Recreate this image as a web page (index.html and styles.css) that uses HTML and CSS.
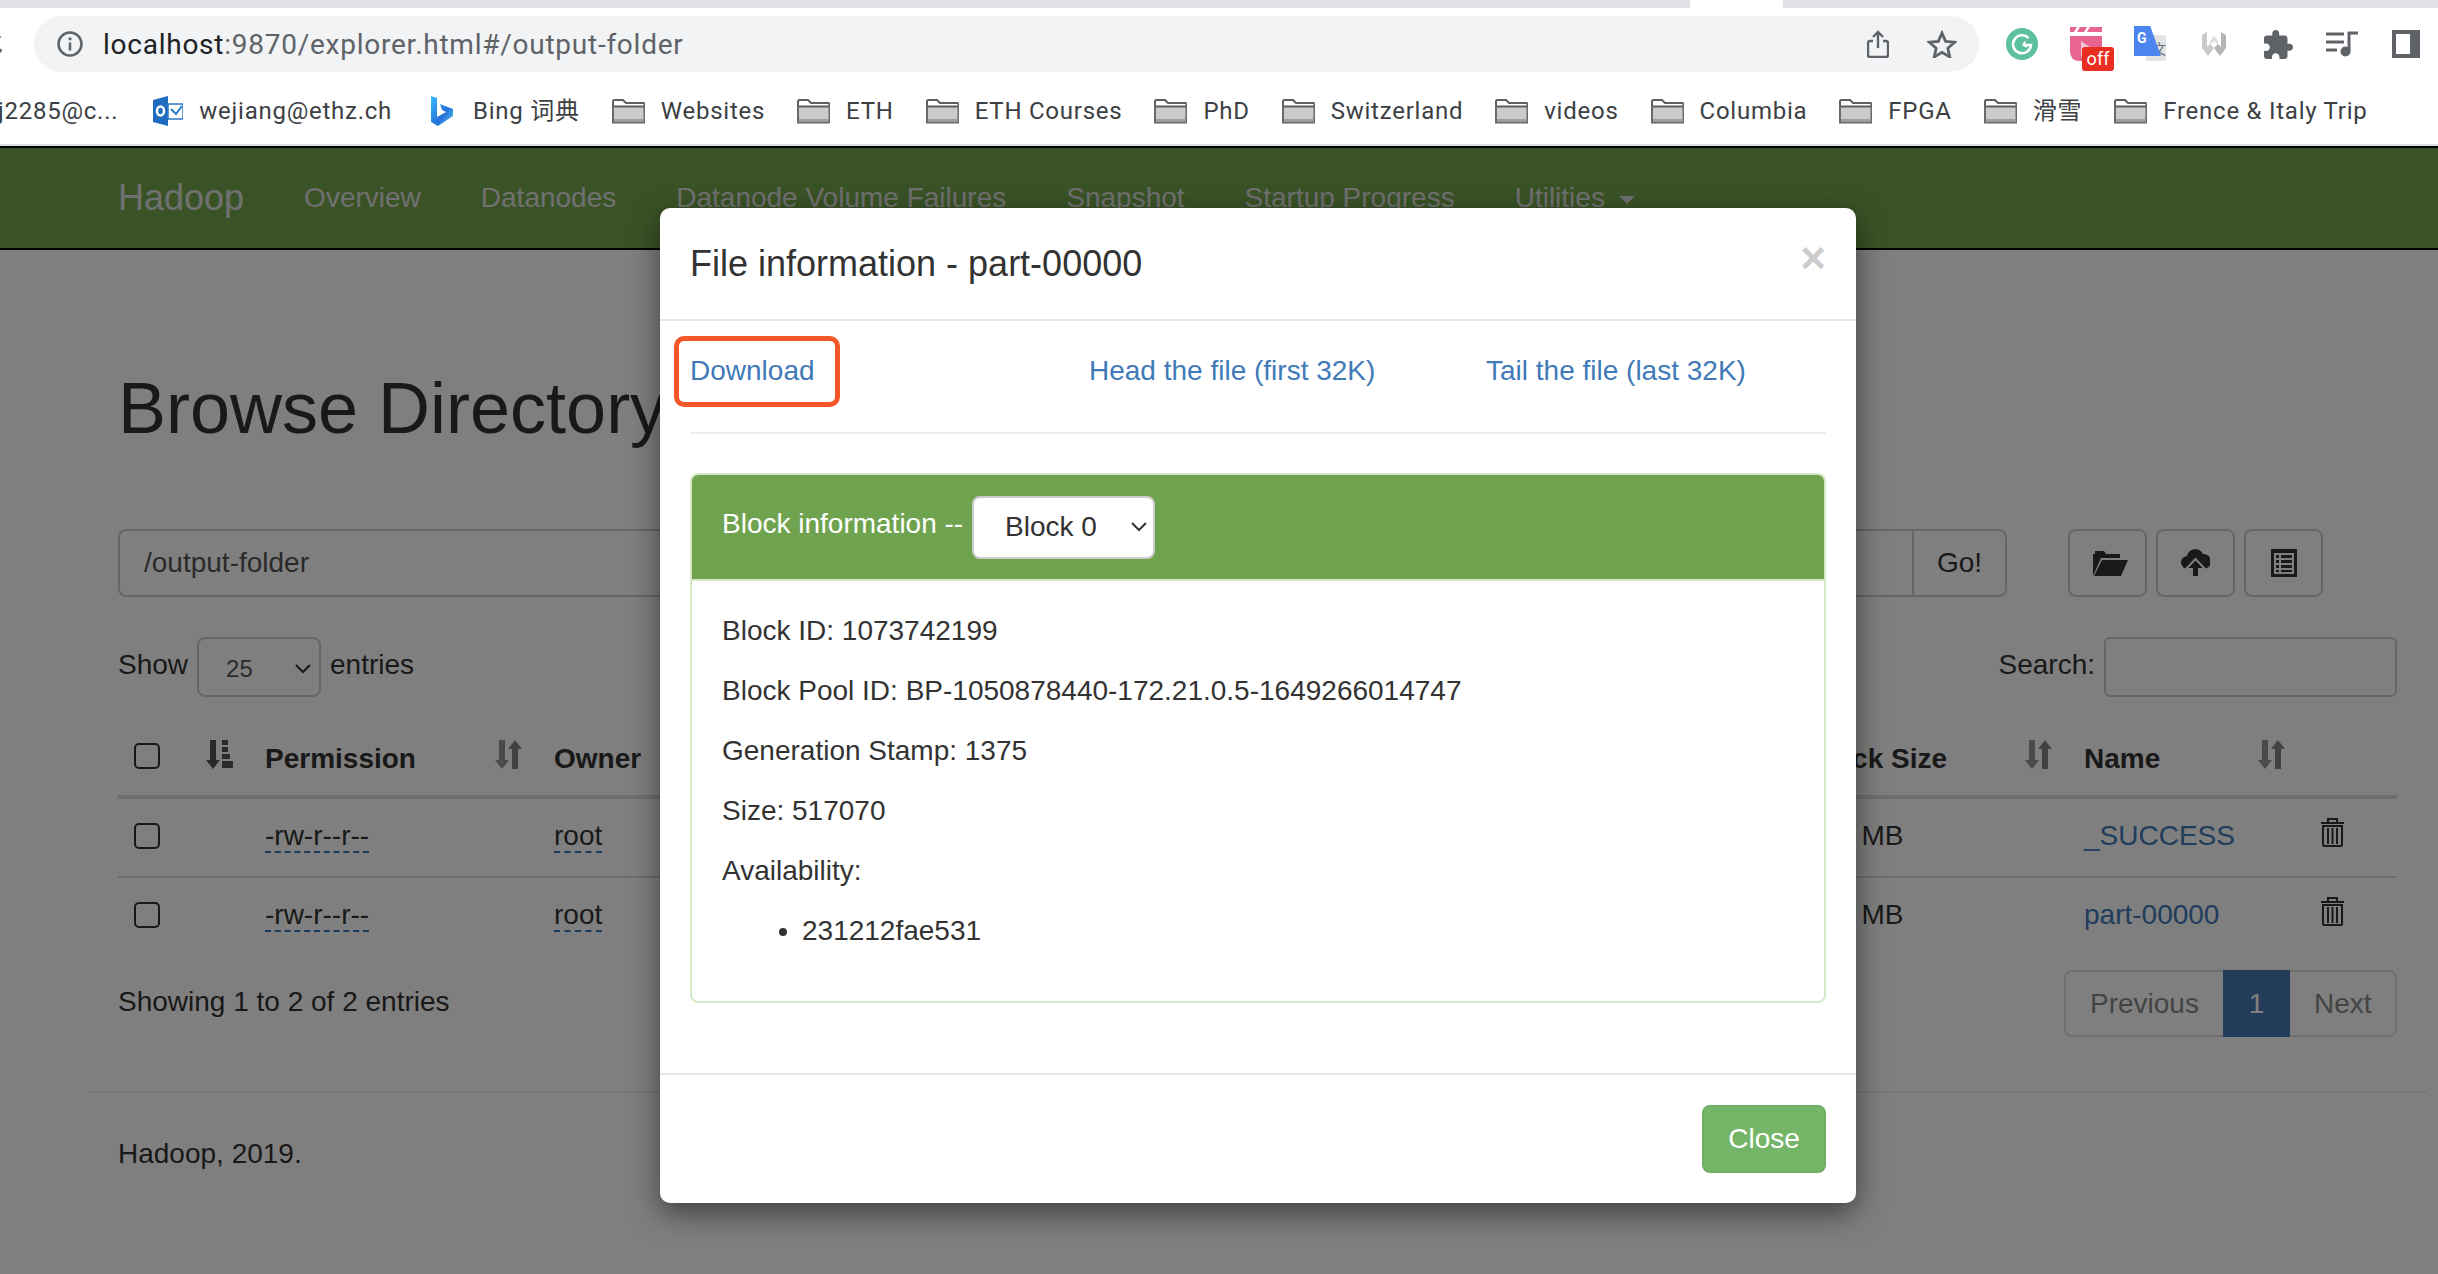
FILE: index.html
```html
<!DOCTYPE html>
<html lang="en">
<head>
    <meta charset="UTF-8">
    <title>Browsing HDFS</title>
    <link rel="stylesheet" href="styles.css">
</head>
<body>
    <svg class="sprites" width="0" height="0">
        <symbol id="folder" viewBox="0 0 33 25">
            <path d="M1 24V2.500Q1 1 2.500 1H11l3 3h17q1.500 0 1.500 1.500V24z" fill="#cbcbcb"/>
            <path d="M1 7.500V2.500Q1 1 2.500 1H11l3 3h17q1.500 0 1.500 1.500v2z" fill="#fff" stroke="#5f5f5f" stroke-width="2"/>
            <path d="M1 7V23.500h31.500V7" fill="none" stroke="#6a6a6a" stroke-width="2"/>
            <path d="M2 20h29v3H2z" fill="#9e9e9e"/>
        </symbol>
        <symbol id="sort" viewBox="0 0 28 29">
            <path d="M5 0h6v20h4l-7 9-7-9h4z" fill="#666" opacity=".7"/>
            <path d="M17 29h6V9h4l-7-9-7 9h4z" fill="#666" opacity=".8" transform="translate(1 0)"/>
        </symbol>
        <symbol id="trash" viewBox="0 0 25 30">
            <path d="M1 6h23M8 5V2h9v3" fill="none" stroke="#333" stroke-width="2"/>
            <path d="M3 9h19v19a1 1 0 0 1-1 1H4a1 1 0 0 1-1-1z" fill="none" stroke="#333" stroke-width="2"/>
            <path d="M8 11v16M12.500 11v16M17 11v16" stroke="#333" stroke-width="2"/>
        </symbol>
    </svg>

    <div class="tabstrip"><span class="tab-gap"></span></div>

    <div class="toolbar">
        <svg class="reload" width="24" height="24" viewBox="0 0 24 24"><path d="M20 6a11 11 0 1 0 1 11" fill="none" stroke="#5f6368" stroke-width="3"/></svg>
        <div class="omnibox">
            <svg class="info-icon" width="26" height="26" viewBox="0 0 26 26">
                <circle cx="13" cy="13" r="11.500" fill="none" stroke="#5f6368" stroke-width="2.500"/>
                <path d="M13 11.500v8" stroke="#5f6368" stroke-width="2.500"/>
                <circle cx="13" cy="7.800" r="1.600" fill="#5f6368"/>
            </svg>
            <span class="url"><b>localhost</b>:9870/explorer.html#/output-folder</span>
            <svg class="share-icon" width="22" height="28" viewBox="0 0 22 28">
                <path d="M6 11H3a2 2 0 0 0-2 2v12a2 2 0 0 0 2 2h16a2 2 0 0 0 2-2V13a2 2 0 0 0-2-2h-3M11 18V2M6 7l5-5 5 5" fill="none" stroke="#5f6368" stroke-width="2.400"/>
            </svg>
            <svg class="star-icon" width="30" height="28" viewBox="0 0 30 28">
                <path d="M15 3l3.600 8.400 9 .8-6.800 6 2 8.800L15 22.300 7.200 27l2-8.800-6.800-6 9-.8z" fill="none" stroke="#5f6368" stroke-width="2.800" stroke-linejoin="miter"/>
            </svg>
        </div>
        <div class="extensions">
            <svg class="ext ext-grammarly" width="32" height="32" viewBox="0 0 32 32">
                <circle cx="16" cy="16" r="16" fill="#5cc19c"/>
                <path d="M22.500 10A9 9 0 1 0 25 17h-7" fill="none" stroke="#fff" stroke-width="2.600"/>
                <path d="M19 13.500l-1.500 3.500 3.500 2" fill="none" stroke="#fff" stroke-width="2"/>
            </svg>
            <div class="ext ext-video">
                <svg width="32" height="34" viewBox="0 0 32 34">
                    <path d="M0 0h32v5H0z" fill="#e8658f"/>
                    <path d="M7 0h3L7 5H4zM17 0h3l-3 5h-3z" fill="#fff"/>
                    <path d="M0 9h32v15q0 10-10 10H10Q0 34 0 24z" fill="#e8658f"/>
                    <path d="M11 14l12 8-12 8z" fill="#f7c4d3"/>
                </svg>
                <span class="off-badge">off</span>
            </div>
            <div class="ext ext-translate">
                <span class="page-back">文</span>
                <span class="page-front">G</span>
            </div>
            <svg class="ext ext-wiki" width="24" height="24" viewBox="0 0 24 24">
                <path d="M0 3l5-3v15l3-3 4 4-6 8-6-8z" fill="#c9c9c9"/>
                <path d="M24 3l-5-3v15l-3-3-4 4 6 8 6-8z" fill="#b5b5b5"/>
                <path d="M12 4l4 5v4l-4-4-4 4V9z" fill="#dedede"/>
            </svg>
            <svg class="ext ext-puzzle" width="29" height="29" viewBox="2 1 21 21">
                <path d="M20.500 11H19V7c0-1.100-.9-2-2-2h-4V3.500C13 2.120 11.880 1 10.500 1S8 2.120 8 3.500V5H4c-1.100 0-1.990.9-1.990 2v3.800H3.500c1.490 0 2.700 1.210 2.700 2.700s-1.210 2.700-2.700 2.700H2V20c0 1.100.9 2 2 2h3.800v-1.500c0-1.490 1.210-2.700 2.700-2.700 1.490 0 2.700 1.210 2.700 2.700V22H17c1.100 0 2-.9 2-2v-4h1.500c1.380 0 2.500-1.120 2.500-2.500S21.880 11 20.500 11z" fill="#5f6368"/>
            </svg>
            <svg class="ext ext-queue" width="32" height="26" viewBox="0 0 32 26">
                <path d="M0 3h18M0 11h18M0 19h11" stroke="#5f6368" stroke-width="3"/>
                <path d="M23 20V2h9" fill="none" stroke="#5f6368" stroke-width="3"/>
                <circle cx="19.500" cy="20.500" r="5" fill="#5f6368"/>
            </svg>
            <svg class="ext ext-side" width="28" height="28" viewBox="0 0 28 28">
                <path fill-rule="evenodd" d="M0 0h28v28H0zM4 4v20h14V4z" fill="#5f6368"/>
            </svg>
        </div>
    </div>

    <div class="bookmarks">
        <span class="bm bm-first">j2285@c...</span>
        <span class="bm bm-mail">
            <svg class="bm-logo" width="30" height="30" viewBox="0 0 30 30">
                <path d="M0 4l15-4v30L0 26z" fill="#1f6cbf"/>
                <ellipse cx="7.500" cy="15" rx="3.500" ry="4.500" fill="none" stroke="#fff" stroke-width="2.500"/>
                <path d="M15 8h15v15H15z" fill="#fff" stroke="#2a78c8" stroke-width="1.500"/>
                <path d="M18 13l5 5 6-8" fill="none" stroke="#2a78c8" stroke-width="2"/>
            </svg>
            wejiang@ethz.ch
        </span>
        <span class="bm bm-bing">
            <svg class="bm-logo" width="22" height="30" viewBox="0 0 22 30">
                <defs>
                    <linearGradient id="bing-g" x1="0" y1="0" x2="1" y2="1">
                        <stop offset="0" stop-color="#37bdff"/>
                        <stop offset=".6" stop-color="#2470d8"/>
                        <stop offset="1" stop-color="#5fd0f0"/>
                    </linearGradient>
                </defs>
                <path d="M0 0l6 2v19l9-5-4-2-2-6 13 5v7L7 30l-7-4z" fill="url(#bing-g)"/>
            </svg>
            Bing 词典
        </span>
        <span class="bm"><svg class="bm-folder"><use href="#folder"/></svg>Websites</span>
        <span class="bm"><svg class="bm-folder"><use href="#folder"/></svg>ETH</span>
        <span class="bm"><svg class="bm-folder"><use href="#folder"/></svg>ETH Courses</span>
        <span class="bm"><svg class="bm-folder"><use href="#folder"/></svg>PhD</span>
        <span class="bm"><svg class="bm-folder"><use href="#folder"/></svg>Switzerland</span>
        <span class="bm"><svg class="bm-folder"><use href="#folder"/></svg>videos</span>
        <span class="bm"><svg class="bm-folder"><use href="#folder"/></svg>Columbia</span>
        <span class="bm"><svg class="bm-folder"><use href="#folder"/></svg>FPGA</span>
        <span class="bm"><svg class="bm-folder"><use href="#folder"/></svg>滑雪</span>
        <span class="bm"><svg class="bm-folder"><use href="#folder"/></svg>Frence &amp; Italy Trip</span>
    </div>

    <div class="viewport">
        <nav class="navbar">
            <a class="brand">Hadoop</a>
            <a class="nav-link">Overview</a>
            <a class="nav-link">Datanodes</a>
            <a class="nav-link">Datanode Volume Failures</a>
            <a class="nav-link">Snapshot</a>
            <a class="nav-link">Startup Progress</a>
            <a class="nav-link">Utilities <i class="caret"></i></a>
        </nav>

        <main class="page">
            <h1>Browse Directory</h1>

            <div class="path-row">
                <div class="input-group">
                    <input class="path-input" type="text" value="/output-folder">
                    <button class="btn btn-go">Go!</button>
                </div>
                <button class="btn btn-icon">
                    <svg class="icon-open" width="35" height="26" viewBox="0 0 35 26"><path d="M0 26V4h2V1h9l2 3h14v4H8zM9 10h26l-7 16H1z" fill="#333"/></svg>
                </button>
                <button class="btn btn-icon">
                    <svg width="29" height="28" viewBox="0 0 29 28">
                        <path d="M7 20a6.500 6.500 0 0 1-1-13A8.500 8.500 0 0 1 22 5a7.500 7.500 0 0 1 1 15z" fill="#333"/>
                        <path d="M14.500 10l9.500 10h-6v8h-7v-8H5z" fill="#333" stroke="#fff" stroke-width="2"/>
                    </svg>
                </button>
                <button class="btn btn-icon">
                    <svg width="26" height="28" viewBox="0 0 26 28"><path fill-rule="evenodd" d="M0 0h26v28H0zM3 4v21h20V4z" fill="#333"/><path d="M5 6h3v3H5zM10 6h11v3H10zM5 11h3v3H5zM10 11h11v3H10zM5 16h3v3H5zM10 16h11v3H10zM5 21h3v2H5zM10 21h11v2H10z" fill="#333"/></svg>
                </button>
            </div>

            <div class="dt-top">
                <div class="dt-length">
                    <span class="dt-label">Show</span>
                    <div class="fake-select fake-select-sm">25
                        <svg width="16" height="10" viewBox="0 0 16 10"><path d="M1 1l7 7 7-7" fill="none" stroke="#333" stroke-width="2"/></svg>
                    </div>
                    <span class="dt-label">entries</span>
                </div>
                <div class="dt-search">
                    <span class="dt-label">Search:</span>
                    <input class="search-input" type="text">
                </div>
            </div>

            <table class="dir-table">
                <colgroup>
                    <col class="c-check"><col class="c-perm"><col class="c-owner"><col class="c-covered">
                    <col class="c-block"><col class="c-name"><col class="c-del">
                </colgroup>
                <thead>
                    <tr>
                        <th><div class="th-in"><input class="check" type="checkbox">
                            <svg class="sort" width="28" height="29" viewBox="0 0 28 29"><path d="M5 0h6v20h4l-7 9-7-9h4z" fill="#555"/><path d="M17 0h6v5h-6zM17 7h6v5h-6zM17 14h8v5h-8zM17 21h11v7H17z" fill="#555"/></svg>
                        </div></th>
                        <th><div class="th-in">Permission<svg class="sort"><use href="#sort"/></svg></div></th>
                        <th><div class="th-in">Owner<svg class="sort"><use href="#sort"/></svg></div></th>
                        <th></th>
                        <th><div class="th-in">Block Size<svg class="sort"><use href="#sort"/></svg></div></th>
                        <th><div class="th-in">Name<svg class="sort"><use href="#sort"/></svg></div></th>
                        <th></th>
                    </tr>
                </thead>
                <tbody>
                    <tr>
                        <td><input class="check" type="checkbox"></td>
                        <td><span class="editable">-rw-r--r--</span></td>
                        <td><span class="editable">root</span></td>
                        <td></td>
                        <td>128 MB</td>
                        <td><a class="link">_SUCCESS</a></td>
                        <td><svg class="trash"><use href="#trash"/></svg></td>
                    </tr>
                    <tr>
                        <td><input class="check" type="checkbox"></td>
                        <td><span class="editable">-rw-r--r--</span></td>
                        <td><span class="editable">root</span></td>
                        <td></td>
                        <td>128 MB</td>
                        <td><a class="link">part-00000</a></td>
                        <td><svg class="trash"><use href="#trash"/></svg></td>
                    </tr>
                </tbody>
            </table>

            <div class="dt-bottom">
                <div class="dt-info">Showing 1 to 2 of 2 entries</div>
                <div class="pagination">
                    <a class="pg pg-prev">Previous</a>
                    <a class="pg pg-active">1</a>
                    <a class="pg pg-next">Next</a>
                </div>
            </div>

            <hr class="foot-rule">
            <p class="foot-text">Hadoop, 2019.</p>
        </main>

        <div class="backdrop"></div>

        <div class="modal">
            <div class="modal-head">
                <h4 class="modal-title">File information - part-00000</h4>
                <span class="close">×</span>
            </div>
            <div class="modal-body">
                <div class="file-links">
                    <a class="link file-download">Download</a>
                    <a class="link">Head the file (first 32K)</a>
                    <a class="link">Tail the file (last 32K)</a>
                </div>
                <div class="panel">
                    <div class="panel-head">
                        <span class="panel-label">Block information --</span>
                        <div class="fake-select fake-select-lg">Block 0
                            <svg width="16" height="10" viewBox="0 0 16 10"><path d="M1 1l7 7 7-7" fill="none" stroke="#333" stroke-width="2"/></svg>
                        </div>
                    </div>
                    <div class="panel-body">
                        <p>Block ID: 1073742199</p>
                        <p>Block Pool ID: BP-1050878440-172.21.0.5-1649266014747</p>
                        <p>Generation Stamp: 1375</p>
                        <p>Size: 517070</p>
                        <p>Availability:</p>
                        <ul>
                            <li>231212fae531</li>
                        </ul>
                    </div>
                </div>
            </div>
            <div class="modal-foot">
                <button class="btn-close">Close</button>
            </div>
        </div>
    </div>
</body>
</html>
```

FILE: styles.css
```css
* {
    box-sizing: border-box;
}

html, body {
    margin: 0;
    padding: 0;
    height: 1274px;
    overflow: hidden;
    background-color: #fff;
}

body {
    font-family: "Liberation Sans", Arial, sans-serif;
    font-size: 28px;
    line-height: 40px;
    color: #333;
}

.sprites {
    display: none;
}

/* browser chrome */
.tabstrip {
    height: 8px;
    background-color: #dfe1e5;
}

.tab-gap {
    display: block;
    width: 93px;
    height: 8px;
    margin-left: 1690px;
    background-color: #fff;
}

.toolbar {
    display: flex;
    align-items: center;
    height: 64px;
    padding-top: 8px;
    font-family: Roboto, sans-serif;
}

.reload {
    margin-left: -20px;
    flex: none;
}

.omnibox {
    display: flex;
    align-items: center;
    width: 1945px;
    height: 56px;
    margin-left: 30px;
    padding-left: 23px;
    border-radius: 28px;
    background-color: #f1f3f4;
    flex: none;
}

.url {
    width: 1764px;
    margin-left: 20px;
    padding-top: 1px;
    font-size: 28px;
    letter-spacing: 0.75px;
    color: #5f6368;
    white-space: nowrap;
}

.url b {
    font-weight: 400;
    color: #202124;
}

.star-icon {
    margin-left: 38px;
}

.extensions {
    display: flex;
    align-items: center;
    margin-left: 27px;
}

.ext {
    flex: none;
}

.ext-video {
    position: relative;
    width: 32px;
    height: 34px;
    margin-left: 32px;
}

.off-badge {
    position: absolute;
    left: 12px;
    top: 20px;
    width: 32px;
    height: 24px;
    border-radius: 3px;
    background-color: #ea2e21;
    color: #fff;
    font-size: 18px;
    line-height: 24px;
    text-align: center;
}

.ext-translate {
    position: relative;
    width: 32px;
    height: 36px;
    margin-left: 32px;
}

.page-back {
    position: absolute;
    right: 0;
    top: 9px;
    width: 20px;
    height: 26px;
    background-color: #e3e3e3;
    color: #5f6b75;
    font-family: "Noto Sans CJK SC", sans-serif;
    font-size: 14px;
    line-height: 26px;
    text-align: right;
    border-radius: 0 2px 2px 0;
}

.page-front {
    position: absolute;
    left: 0;
    top: 0;
    width: 27px;
    height: 30px;
    padding-left: 3px;
    background-color: #4d85f0;
    color: #fff;
    font-size: 14px;
    font-weight: 700;
    line-height: 24px;
    clip-path: polygon(0 0, 60% 0, 100% 100%, 0 100%);
}

.ext-wiki {
    margin-left: 36px;
}

.ext-puzzle {
    margin-left: 38px;
}

.ext-queue {
    margin-left: 33px;
}

.ext-side {
    margin-left: 34px;
}

.bookmarks {
    display: flex;
    align-items: center;
    gap: 32px;
    height: 74px;
    margin-left: -2px;
    padding-top: 6px;
    border-bottom: 2px solid #dadce0;
    font-family: Roboto, "Noto Sans CJK SC", sans-serif;
    font-size: 24px;
    letter-spacing: 0.75px;
    color: #3c4043;
    white-space: nowrap;
}

.bm {
    display: flex;
    align-items: center;
    gap: 16px;
}

.bm-mail {
    margin-left: 3px;
}

.bm-bing {
    gap: 20px;
    margin-left: 7px;
}

.bm-logo {
    flex: none;
}

.bm-folder {
    width: 33px;
    height: 25px;
    flex: none;
}

/* hadoop page, under the backdrop */
.viewport {
    position: relative;
    height: 1128px;
    overflow: hidden;
}

.navbar {
    display: flex;
    align-items: center;
    gap: 60px;
    height: 104px;
    padding-left: 118px;
    background-color: #75a74d;
    border-top: 2px solid #000;
    border-bottom: 2px solid #000;
    color: #e0e0e0;
    white-space: nowrap;
}

.brand {
    font-size: 36px;
}

.caret {
    display: inline-block;
    margin-left: 6px;
    vertical-align: middle;
    border-top: 8px solid #e0e0e0;
    border-left: 8px solid transparent;
    border-right: 8px solid transparent;
}

.page {
    padding: 0 41px 0 118px;
}

h1 {
    margin: 118px 0 80px;
    font-size: 72px;
    font-weight: 500;
    line-height: 81px;
}

.path-row {
    display: flex;
    gap: 9px;
    margin-right: 74px;
}

.input-group {
    display: flex;
    flex: 1;
    margin-right: 52px;
}

.path-input {
    flex: 1;
    height: 68px;
    padding: 0 24px;
    border: 2px solid #ccc;
    border-right: 0;
    border-radius: 8px 0 0 8px;
    font: inherit;
    color: #555;
    background-color: #fff;
}

.btn {
    display: flex;
    align-items: center;
    justify-content: center;
    height: 68px;
    padding: 0;
    border: 2px solid #ccc;
    border-radius: 8px;
    background-color: #fff;
    font: inherit;
    color: #333;
}

.btn-go {
    width: 95px;
    border-radius: 0 8px 8px 0;
}

.btn-icon {
    width: 79px;
}

.icon-open {
    margin-left: 6px;
}

.dt-top {
    display: flex;
    justify-content: space-between;
    align-items: center;
    margin-top: 40px;
}

.dt-length,
.dt-search {
    display: flex;
    align-items: center;
    gap: 9px;
}

.dt-label {
    padding-bottom: 5px;
}

.fake-select {
    display: flex;
    align-items: center;
    justify-content: space-between;
    border-radius: 8px;
    background-color: #fff;
}

.fake-select-sm {
    width: 124px;
    height: 60px;
    padding: 4px 8px 0 27px;
    border: 2px solid #ccc;
    font-size: 24px;
    color: #555;
}

.fake-select-lg {
    width: 183px;
    height: 63px;
    padding: 0 6px 0 31px;
    border: 2px solid #ccc;
    color: #333;
}

.search-input {
    width: 293px;
    height: 60px;
    border: 2px solid #ccc;
    border-radius: 6px;
    background-color: #fff;
}

.dir-table {
    width: 2279px;
    margin-top: 18px;
    border-collapse: collapse;
    table-layout: fixed;
    white-space: nowrap;
}

.c-check { width: 131px; }
.c-perm { width: 289px; }
.c-owner { width: 200px; }
.c-covered { width: 1053px; }
.c-block { width: 277px; }
.c-name { width: 233px; }
.c-del { width: 96px; }

th {
    height: 82px;
    padding: 0 16px 16px;
    border-bottom: 4px solid #ddd;
    text-align: left;
    vertical-align: bottom;
    font-weight: 700;
}

.th-in {
    display: flex;
    justify-content: space-between;
    align-items: flex-start;
    min-height: 40px;
}

.th-in .check {
    margin-top: 4px;
}

.sort {
    width: 28px;
    height: 29px;
    flex: none;
    margin-top: 1px;
}

td {
    height: 78px;
    padding: 17px 16px 20px;
    border-bottom: 2px solid #ddd;
    vertical-align: top;
}

tr:last-child td {
    border-bottom: 0;
}

.check {
    appearance: none;
    display: block;
    width: 26px;
    height: 26px;
    margin: 7px 0 0;
    border: 2px solid #333;
    border-radius: 5px;
    background-color: #fff;
}

.editable {
    border-bottom: 2px dashed #337ab7;
}

.link {
    color: #407ab8;
}

.trash {
    display: block;
    width: 25px;
    height: 30px;
    margin: 1px 0 0 3px;
}

.dt-bottom {
    display: flex;
    justify-content: space-between;
    align-items: center;
    margin-top: 15px;
}

.dt-info {
    padding-bottom: 3px;
}

.pagination {
    display: flex;
    height: 67px;
    border: 2px solid #ddd;
    border-radius: 8px;
    color: #888;
    line-height: 63px;
}

.pg-prev {
    width: 157px;
    padding-left: 24px;
}

.pg-active {
    width: 67px;
    margin: -2px 0;
    padding: 2px 0;
    text-align: center;
    background-color: #4478b4;
    color: #fff;
}

.pg-next {
    width: 105px;
    padding-left: 24px;
}

.foot-rule {
    margin: 54px -30px 0;
    border: 0;
    border-top: 2px solid #eee;
}

.foot-text {
    margin: 41px 0 0;
}

/* dialog */
.backdrop {
    position: absolute;
    left: 0;
    top: 0;
    right: 0;
    bottom: 0;
    background-color: rgba(0, 0, 0, 0.5);
}

.modal {
    position: absolute;
    left: 660px;
    top: 62px;
    width: 1196px;
    border-radius: 10px;
    background-color: #fff;
    box-shadow: 0 10px 30px rgba(0, 0, 0, 0.5);
}

.modal-head {
    display: flex;
    justify-content: space-between;
    height: 113px;
    padding: 36px 30px 0 30px;
    border-bottom: 2px solid #e5e5e5;
}

.modal-title {
    margin: 0;
    font-size: 36px;
    font-weight: 500;
    line-height: 40px;
}

.close {
    margin-top: -8px;
    font-size: 44px;
    font-weight: 700;
    line-height: 44px;
    color: #ccc;
}

.modal-body {
    padding: 0 30px;
}

.file-links {
    display: grid;
    grid-template-columns: 399px 397px 1fr;
    align-items: center;
    height: 113px;
    padding-bottom: 11px;
    border-bottom: 2px solid #eee;
}

.file-download {
    position: relative;
    justify-self: start;
}

.file-download::after {
    content: "";
    position: absolute;
    left: -16px;
    right: -25px;
    top: -15px;
    bottom: -16px;
    border: 5px solid #f4572a;
    border-radius: 10px;
}

.panel {
    margin-top: 39px;
    border: 2px solid #d6e9c6;
    border-radius: 8px;
    overflow: hidden;
}

.panel-head {
    display: flex;
    align-items: center;
    height: 106px;
    padding-left: 30px;
    background-color: #70a34f;
    color: #fff;
    border-bottom: 2px solid #d6e9c6;
}

.panel-label {
    width: 250px;
    padding-bottom: 6px;
    white-space: nowrap;
}

.panel-body {
    padding: 30px 30px 30px;
}

.panel-body p {
    margin: 0 0 20px;
}

.panel-body ul {
    margin: 0 0 20px;
    padding-left: 80px;
}

.modal-foot {
    display: flex;
    justify-content: flex-end;
    margin-top: 70px;
    padding: 30px;
    border-top: 2px solid #e5e5e5;
}

.btn-close {
    width: 124px;
    height: 68px;
    border: 2px solid #6fae62;
    border-radius: 8px;
    background-color: #74b567;
    color: #fff;
    font: inherit;
}
```
